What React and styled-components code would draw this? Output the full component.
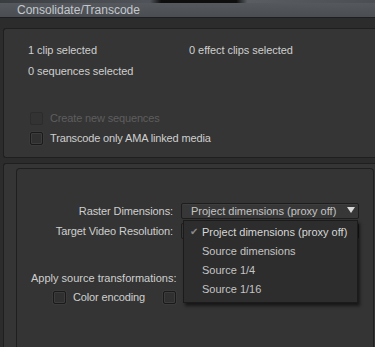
import React from 'react';
import styled, { createGlobalStyle } from 'styled-components';

const Global = createGlobalStyle`
  html, body {
    margin: 0;
    background: #2b2b2b;
  }
  body {
    font-family: "Liberation Sans", Arial, sans-serif;
    font-size: 11px;
    color: #cfcfcf;
  }
`;

const Window = styled.div`
  width: 375px;
  height: 347px;
  overflow: hidden;
  display: flex;
  flex-direction: column;
  background: #2b2b2b;
  position: relative;
`;

const TopStrip = styled.div`
  height: 3px;
  flex-shrink: 0;
  background: linear-gradient(90deg, #3a3d40 0%, #50545a 40%, #0e0e0e 43%, #0e0e0e 63%, #5a5e63 66%, #4b4f54 100%);
`;

const TitleBar = styled.div`
  height: 14px;
  flex-shrink: 0;
  padding-left: 17px;
  background: linear-gradient(180deg, #55595e 0%, #4a4e53 100%);
  border-bottom: 1px solid #1d1e1f;
  color: #c3c7cc;
  font-size: 12px;
  line-height: 14px;
`;

const Body = styled.div`
  flex: 1;
  display: flex;
  flex-direction: column;
  gap: 5px;
  padding: 10px 0 0 3px;
  background: #2c2c2c;
`;

const Panel = styled.div`
  background: #353535;
  border: 1px solid #1f1f1f;
  border-right: none;
  border-radius: 3px 0 0 3px;
  margin-right: -2px;
`;

const TopPanel = styled(Panel)`
  height: 130px;
  flex-shrink: 0;
  box-sizing: border-box;
  padding: 15px 0 0 24px;
  display: flex;
  flex-direction: column;
`;

const Stats = styled.div`
  display: grid;
  grid-template-columns: 161px auto;
  row-gap: 8px;
  line-height: 13px;
  letter-spacing: -0.05px;
`;

const Options = styled.div`
  margin-top: 34px;
  display: flex;
  flex-direction: column;
  gap: 7px;
  padding-left: 2px;
`;

const CheckRow = styled.label`
  display: flex;
  align-items: center;
  gap: 7px;
  line-height: 13px;
  letter-spacing: -0.15px;
  color: ${({ disabled }) => (disabled ? '#5e5e5e' : '#cfcfcf')};
`;

const Box = styled.span`
  width: 11px;
  height: 11px;
  flex-shrink: 0;
  border: 1px solid ${({ disabled }) => (disabled ? '#2c2c2c' : '#1a1a1a')};
  border-radius: 2px;
  background: ${({ disabled }) => (disabled ? '#333' : '#303030')};
  box-shadow: ${({ disabled }) => (disabled ? 'none' : 'inset 0 0 0 1px #3c3c3c, 0 0 0 1px #3a3a3a')};
`;

const BottomPanel = styled(Panel)`
  flex: 1;
  border-bottom: none;
  border-radius: 3px 0 0 0;
  padding: 4px 0 0 12px;
  display: flex;
`;

const Inner = styled.div`
  flex: 1;
  margin-right: 3px;
  border: 1px solid #1f1f1f;
  border-bottom: none;
  border-radius: 4px 4px 0 0;
  background: #343434;
  padding-top: 34px;
  position: relative;
`;

const Form = styled.div`
  display: grid;
  grid-template-columns: 156px 178px;
  column-gap: 8px;
  row-gap: 4px;
  align-items: center;
`;

const Label = styled.div`
  text-align: right;
  color: #cfcfcf;
  line-height: 13px;
  letter-spacing: -0.1px;
`;

const Select = styled.div`
  height: 16px;
  box-sizing: border-box;
  border: 1px solid #1d1d1d;
  border-radius: 2px;
  background: #373737;
  box-shadow: inset 0 1px 0 #3e3e3e;
  display: flex;
  align-items: center;
  justify-content: space-between;
  padding: 0 3px 0 9px;
  color: #c4c4c4;
  position: relative;
`;

const Arrow = styled.span`
  width: 0;
  height: 0;
  border-left: 4px solid transparent;
  border-right: 4px solid transparent;
  border-top: 6px solid #d8d8d8;
  margin-bottom: 2px;
`;

const Menu = styled.div`
  position: absolute;
  left: 1px;
  top: -4px;
  width: 175px;
  box-sizing: border-box;
  padding: 1px 0 4px;
  background: #2d2d2d;
  border: 1px solid #1b1b1b;
  box-shadow: 2px 3px 3px rgba(0, 0, 0, 0.55);
  z-index: 2;
`;

const Item = styled.div`
  height: 19px;
  display: flex;
  align-items: center;
  padding-left: 18px;
  color: ${({ checked }) => (checked ? '#d6d6d6' : '#c4c4c4')};
  position: relative;
`;

const Check = styled.span`
  position: absolute;
  left: 6px;
  top: 4px;
  color: #8a8a8a;
  font-size: 10px;
`;

const Transforms = styled.div`
  margin-top: 33px;
  padding-left: 14px;
  line-height: 13px;
  color: #cfcfcf;
`;

const TransformChecks = styled.div`
  display: flex;
  margin-top: 6px;
  padding-left: 36px;
`;

const TransformItem = styled(CheckRow)`
  width: 110px;
`;

const items = [
  'Project dimensions (proxy off)',
  'Source dimensions',
  'Source 1/4',
  'Source 1/16',
];

export default function App() {
  return (
    <Window>
      <Global />
      <TopStrip />
      <TitleBar>Consolidate/Transcode</TitleBar>
      <Body>
        <TopPanel>
          <Stats>
            <span>1 clip selected</span>
            <span>0 effect clips selected</span>
            <span>0 sequences selected</span>
          </Stats>
          <Options>
            <CheckRow disabled>
              <Box disabled />
              Create new sequences
            </CheckRow>
            <CheckRow>
              <Box />
              Transcode only AMA linked media
            </CheckRow>
          </Options>
        </TopPanel>
        <BottomPanel>
          <Inner>
            <Form>
              <Label>Raster Dimensions:</Label>
              <Select>
                Project dimensions (proxy off)
                <Arrow />
              </Select>
              <Label>Target Video Resolution:</Label>
              <Select>
                <Menu>
                  {items.map((it, i) => (
                    <Item key={it} checked={i === 0}>
                      {i === 0 && <Check>✔</Check>}
                      {it}
                    </Item>
                  ))}
                </Menu>
              </Select>
            </Form>
            <Transforms>Apply source transformations:</Transforms>
            <TransformChecks>
              <TransformItem>
                <Box />
                Color encoding
              </TransformItem>
              <TransformItem>
                <Box />
              </TransformItem>
            </TransformChecks>
          </Inner>
        </BottomPanel>
      </Body>
    </Window>
  );
}
